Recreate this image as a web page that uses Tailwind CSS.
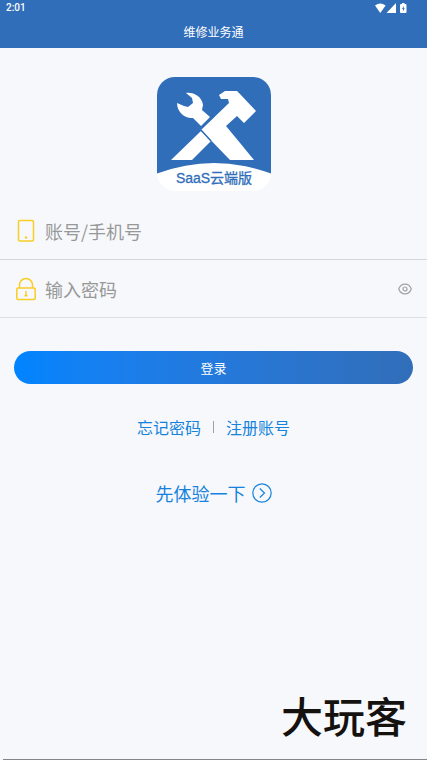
<!DOCTYPE html>
<html lang="zh-CN">
<head>
<meta charset="utf-8">
<meta name="viewport" content="width=device-width, initial-scale=1">
<title>维修业务通</title>
<script src="https://cdn.jsdelivr.net/npm/@tailwindcss/browser@4"></script>
</head>
<body class="flex min-h-screen flex-col bg-[#f6f8fc] font-['Noto_Sans_CJK_SC',sans-serif]">
  <header class="bg-[#316eb9] text-white">
    <div class="flex h-4 items-center justify-between pl-1.5 pr-5">
      <time class="font-[Roboto,sans-serif] text-[10px] leading-4 font-medium">2:01</time>
      <div class="flex items-center">
        <svg class="h-3 w-8" viewBox="0 0 32 12" fill="currentColor" aria-hidden="true">
          <path d="M0 3.6Q5.3-.8 10.6 3.6L5.3 11Z"/>
          <path d="M21 1V11H11.500Z"/>
          <path fill-rule="evenodd" d="M27 1h2.500v1h1q1 0 1 1v7q0 1-1 1h-4.500q-1 0-1-1V3q0-1 1-1h1ZM28.700 4l-1.700 3h1v2.300l1.700-3h-1Z"/>
        </svg>
      </div>
    </div>
    <h1 class="h-8 text-center text-xs leading-8 font-normal">维修业务通</h1>
  </header>

  <main class="flex flex-1 flex-col">
    <svg class="mx-auto mt-[29px] w-[114px] shrink-0" viewBox="0 0 114 114" role="img" aria-label="SaaS云端版">
      <defs><clipPath id="tile"><rect width="114" height="114" rx="18"/></clipPath></defs>
      <g clip-path="url(#tile)">
        <rect width="114" height="114" fill="#fff"/>
        <path d="M-1-1H115V97Q57 75-1 97Z" fill="#316eb9"/>
      </g>
      <path fill="#fff" d="M29 16C37 15 45 20 46 28L45 33L53 40L44 49L36 41C29 42 20 36 20 26L27 29L31 30L36 26L35 21Z"/>
      <path fill="#fff" d="M44 54L54 64L35 83H14Z"/>
      <path fill="#fff" d="M62 18L68 14H80L83 17L99 34L87 46L80 39L69 49L97 83H73L44 53L72 26L71 22H64Z"/>
      <path stroke="#316eb9" stroke-width="1.500" d="M43 52L57 39M44 53L54 64"/>
      <text x="57" y="106" text-anchor="middle" stroke="#316eb9" stroke-width=".3" class="fill-[#316eb9] font-['Liberation_Sans','Noto_Sans_CJK_SC',sans-serif] text-[14px]">SaaS云端版</text>
    </svg>

    <form class="mt-3">
      <div class="flex h-[57px] items-center border-b border-[#d3d6dc] px-4">
        <label for="account" aria-label="账号/手机号">
          <svg class="h-6 w-5" viewBox="0 0 20 24" fill="none" stroke="#f8cd24" stroke-width="1.500" aria-hidden="true">
            <rect x="2.500" y="1.500" width="15" height="20.500" rx="1.500"/><circle cx="10" cy="18.500" r="1.200" fill="#f8cd24" stroke="none"/>
          </svg>
        </label>
        <input id="account" type="text" placeholder="账号/手机号" class="ml-[9px] min-w-0 flex-1 bg-transparent text-lg leading-7 text-gray-700 outline-none placeholder:text-[#989898]">
      </div>
      <div class="flex h-[58px] items-center border-b border-[#dde0e5] pr-[15px] pl-4">
        <label for="password" aria-label="输入密码">
          <svg class="h-6 w-5" viewBox="0 0 20 24" fill="none" stroke="#f8cd24" stroke-width="1.500" aria-hidden="true">
            <path d="M3.500 11V8a6.500 6.500 0 0 1 13 0v3"/><rect x=".8" y="11" width="18.400" height="11.500" rx="1.200"/><path d="M10 14v5.500M8.500 18.700h3"/>
          </svg>
        </label>
        <input id="password" type="password" placeholder="输入密码" class="ml-[9px] min-w-0 flex-1 bg-transparent text-lg leading-7 text-gray-700 outline-none placeholder:text-[#989898]">
        <button type="button" aria-label="显示密码">
          <svg class="h-3.5 w-3.5" viewBox="0 0 14 14" fill="none" stroke="#a0a2a5" stroke-width="1.200" aria-hidden="true">
            <path d="M.7 7C3.200.5 10.800.5 13.300 7C10.800 13.500 3.200 13.500.7 7Z"/><circle cx="7" cy="7" r="2"/>
          </svg>
        </button>
      </div>
      <div class="px-3.5 pt-[33px]">
        <button type="submit" class="block h-[33px] w-full rounded-full bg-linear-to-r from-[#0084ff] to-[#316eb9] text-[13px] text-white">登录</button>
      </div>
    </form>

    <nav class="mt-[31px] flex items-center justify-center gap-3 text-base leading-6 text-[#1583dd]">
      <a href="#">忘记密码</a>
      <span class="h-3 w-px bg-[#9da0a5]"></span>
      <a href="#">注册账号</a>
    </nav>
    <a href="#" class="mx-auto mt-10 flex items-center gap-1.5 text-lg leading-7 text-[#1583dd]">
      先体验一下
      <svg class="h-5 w-5" viewBox="0 0 20 20" fill="none" stroke="currentColor" stroke-width="1.200" aria-hidden="true"><circle cx="10" cy="10" r="9.200"/><path d="M7.800 5.500L12.500 10L7.800 14.500"/></svg>
    </a>
  </main>

  <footer class="ml-[3px] border-b border-[#858585] pr-5 pb-3.5 text-right text-[42px] leading-[60px] font-medium text-[#14110f]">大玩客</footer>
</body>
</html>
